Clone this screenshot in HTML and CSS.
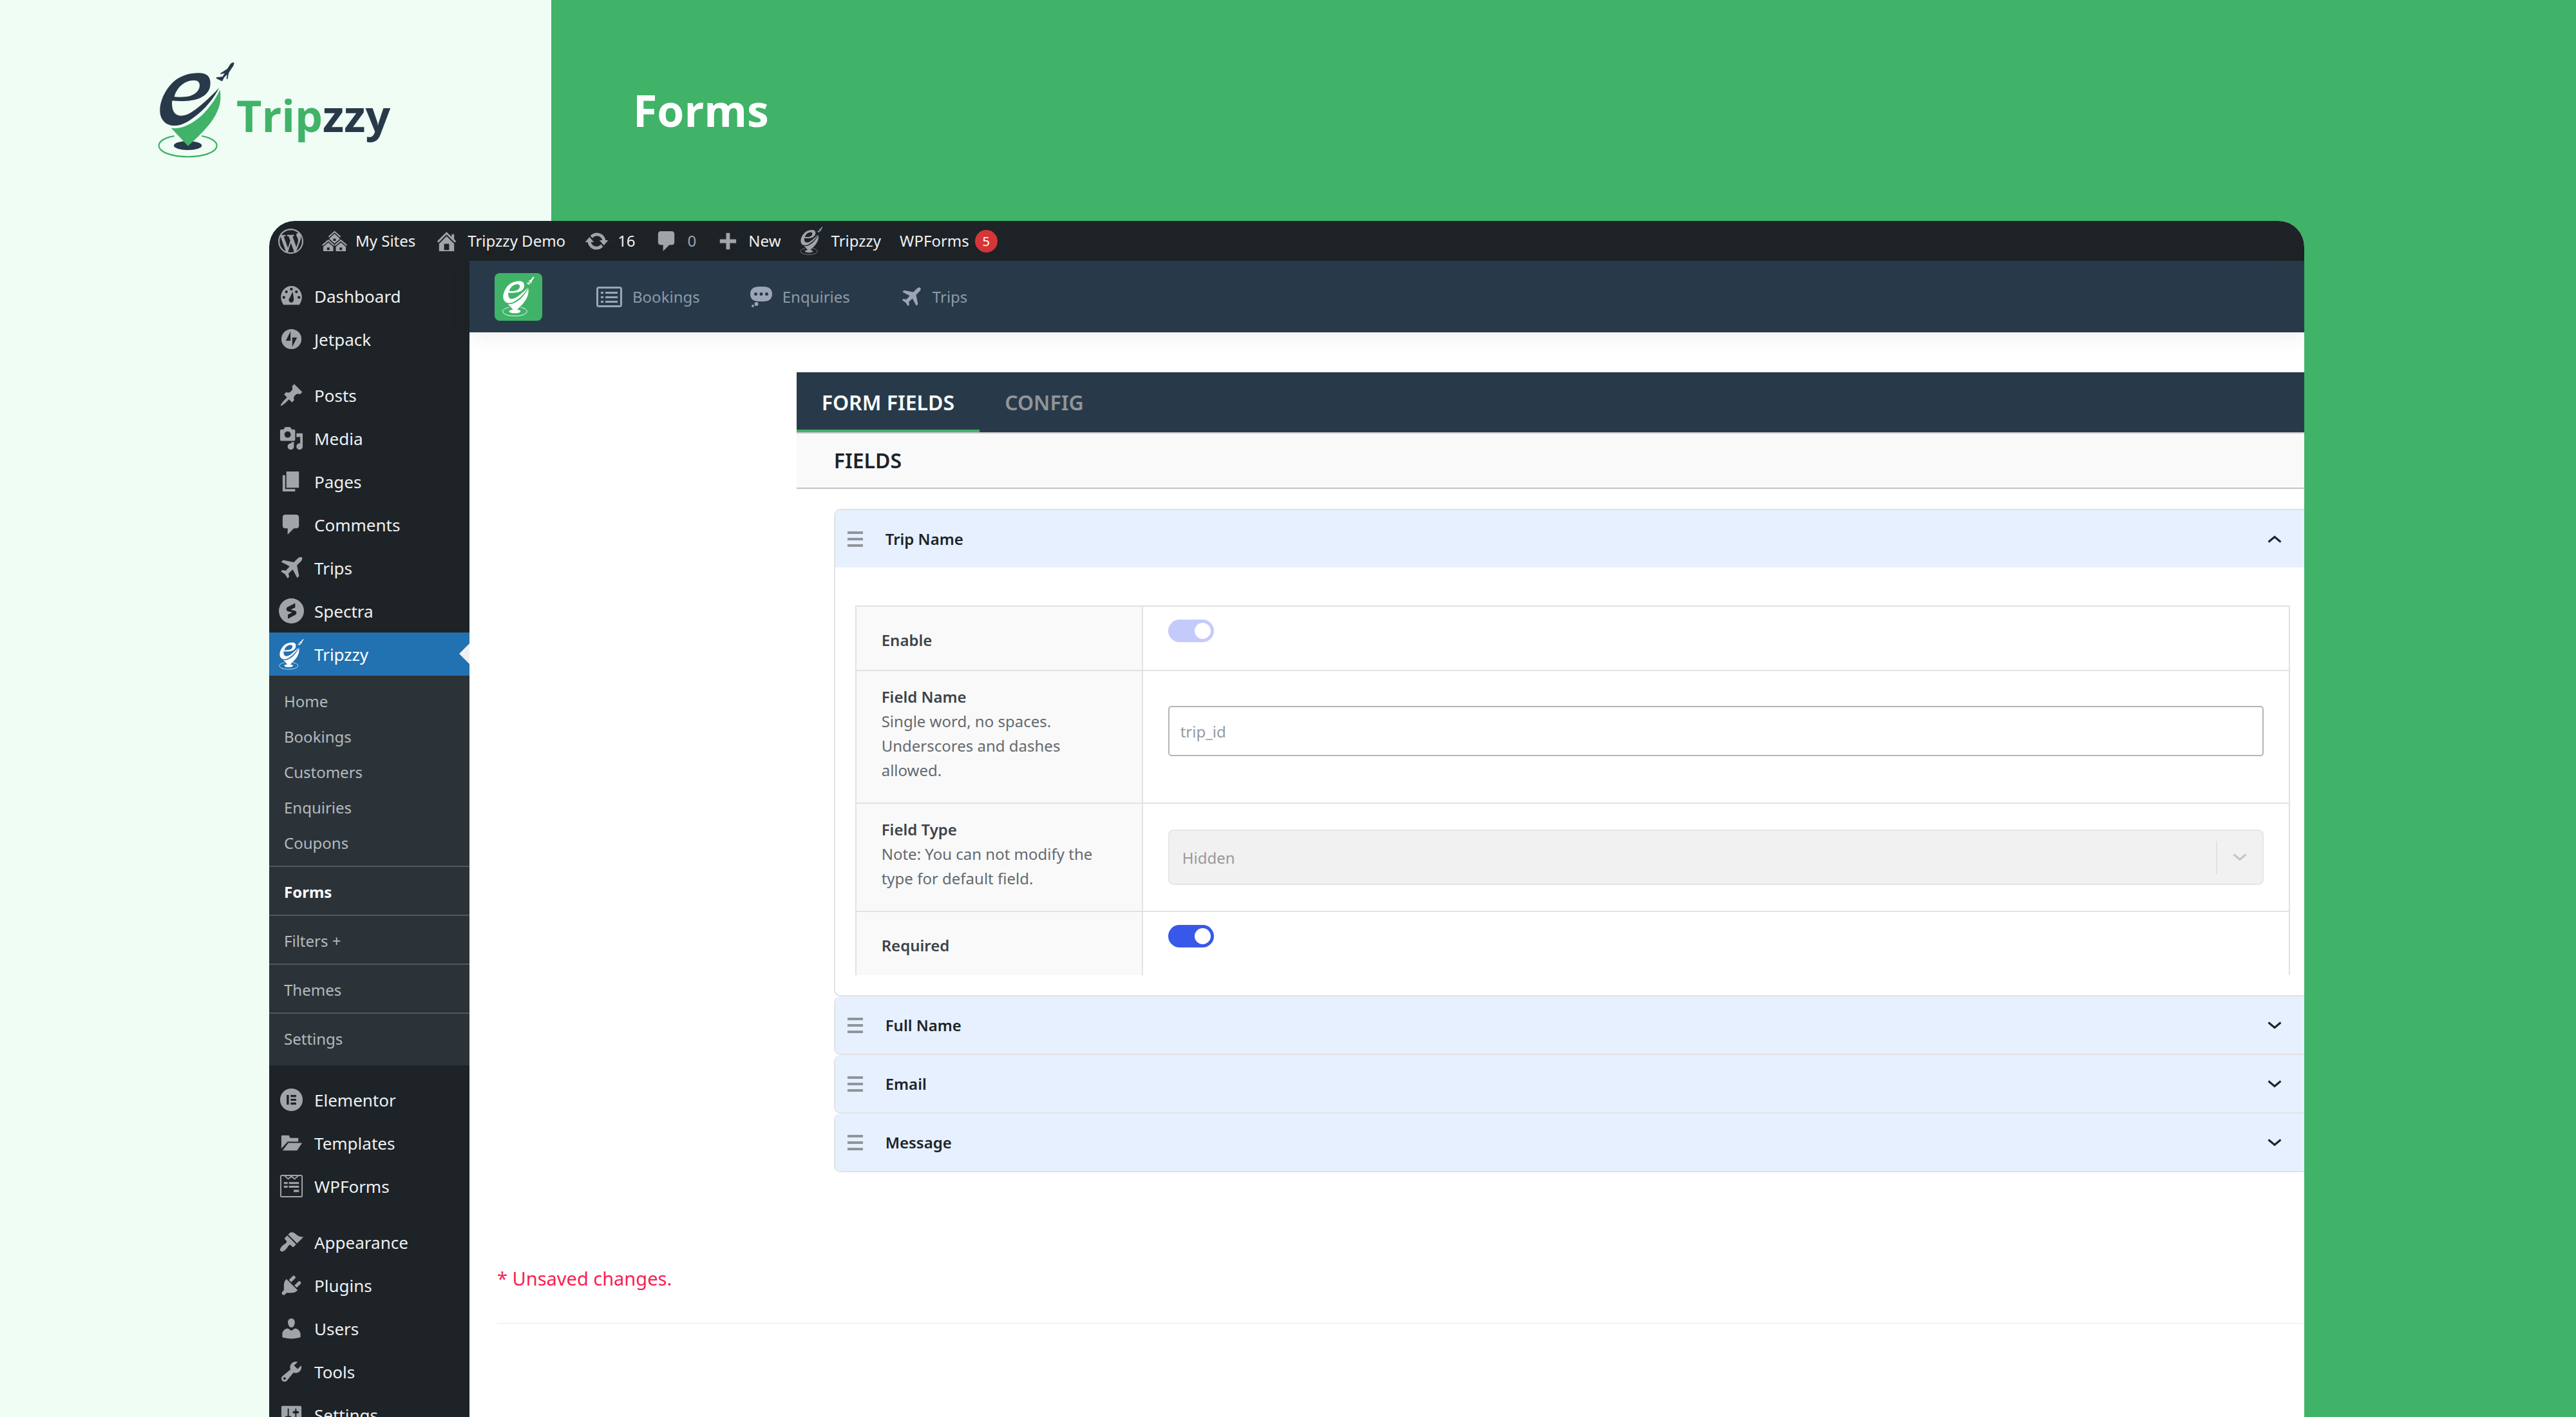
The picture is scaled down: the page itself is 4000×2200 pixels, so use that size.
FILE: index.html
```html
<!DOCTYPE html>
<html lang="en">
<head>
<meta charset="utf-8">
<title>Tripzzy – Forms</title>
<meta name="viewport" content="width=device-width, initial-scale=1">
<link rel="stylesheet" href="styles.css">
</head>
<body>
<svg class="sprite" aria-hidden="true">
  <symbol id="logo" viewBox="28 18 360 450">
    <g class="logo-dark">
      <ellipse cx="168" cy="408" rx="65" ry="21"/>
      <path fill-rule="evenodd" d="M314 138C290 188 248 238 202 272C172 295 140 315 108 315C66 315 38 290 38 244C38 200 62 148 100 112C136 80 180 70 218 70C256 70 273 86 273 118C273 150 256 172 226 186C194 201 140 204 95 199C91 240 104 269 136 269C166 269 196 247 226 222C258 195 290 166 314 138ZM105 181C114 142 150 104 196 104C216 104 223 114 223 127C223 150 206 168 180 176C160 182 130 183 105 181Z"/>
      <path d="M384 22Q376 18 367 27L352 50L320 71L320 76L340 71L329 87L302 90L300 95L328 109L338 90L351 77L348 98L353 98L359 68L381 35Z"/>
    </g>
    <path class="logo-green" d="M318 148C323 185 322 220 298 264C270 318 215 368 169 410L90 326C140 335 200 302 246 254C280 218 303 180 318 148Z"/>
    <path class="logo-ring" d="M102 364C60 372 33 388 33 408C33 438 92 460 168 460S303 438 303 408C303 388 276 372 236 364"/>
  </symbol>
  <symbol id="wordpress" viewBox="0 0 20 20"><path d="M20 10c0-5.51-4.49-10-10-10C4.48 0 0 4.49 0 10c0 5.52 4.48 10 10 10 5.51 0 10-4.48 10-10zM7.78 15.37L4.37 6.22c.55-.02 1.17-.08 1.17-.08.5-.06.44-1.13-.06-1.11 0 0-1.45.11-2.37.11-.18 0-.37 0-.58-.01C4.12 2.69 6.87 1.11 10 1.11c2.33 0 4.45.87 6.05 2.34-.68-.11-1.65.39-1.65 1.58 0 .74.45 1.36.9 2.1.35.61.55 1.36.55 2.46 0 1.49-1.4 5-1.4 5l-3.03-8.37c.54-.02.82-.17.82-.17.5-.05.44-1.25-.06-1.22 0 0-1.44.12-2.38.12-.87 0-2.33-.12-2.33-.12-.5-.03-.56 1.2-.06 1.22l.92.08 1.26 3.41zM17.41 10c.24-.64.74-1.87.43-4.25.7 1.29 1.05 2.71 1.05 4.25 0 3.29-1.73 6.24-4.4 7.78.97-2.59 1.94-5.2 2.92-7.78zM6.1 18.09C3.12 16.65 1.11 13.53 1.11 10c0-1.3.23-2.48.72-3.59C3.25 10.3 4.67 14.2 6.1 18.09zm4.03-6.63l2.58 6.98c-.86.29-1.76.45-2.71.45-.79 0-1.57-.11-2.29-.33.81-2.38 1.62-4.74 2.42-7.1z"/></symbol>
  <symbol id="sites" viewBox="0 0 20 20"><path d="M14.27 6.87L10 3.14 5.73 6.87 5 6.14l5-4.38 5 4.38zM14 8.42l-4.05 3.43L6 8.38v-.74l4-3.5 4 3.5v.78zM11 9.7V8H9v1.7h2zm-1.73 4.03L5 10 .73 13.73 0 13l5-4.38L10 13zm10 0L15 10l-4.27 3.73L10 13l5-4.38L20 13zM5 11l4 3.5V18H1v-3.5zm10 0l4 3.5V18h-8v-3.5zm-9 6v-2H4v2h2zm10 0v-2h-2v2h2z"/></symbol>
  <symbol id="home" viewBox="0 0 20 20"><path d="M16 8.5l1.53 1.53-1.06 1.06L10 4.6l-6.47 6.49-1.06-1.06L10 2.5l4 4v-2h2v4zm-6-2.46l6 5.99V18H4v-5.97zM12 17v-5H8v5h4z"/></symbol>
  <symbol id="update" viewBox="0 0 20 20"><path d="M10.2 3.28c3.53 0 6.43 2.61 6.92 6h2.08l-3.5 4-3.5-4h2.32c-.45-1.97-2.21-3.45-4.32-3.45-1.45 0-2.73.71-3.54 1.78L4.95 5.66C6.23 4.2 8.11 3.28 10.2 3.28zm-.4 13.44c-3.52 0-6.43-2.61-6.92-6H.8l3.5-4c1.17 1.33 2.33 2.67 3.5 4H5.48c.45 1.97 2.21 3.45 4.32 3.45 1.45 0 2.73-.71 3.54-1.78l1.71 1.95c-1.28 1.46-3.15 2.38-5.25 2.38z"/></symbol>
  <symbol id="comments" viewBox="0 0 20 20"><path d="M5 2h9c1.1 0 2 .9 2 2v7c0 1.1-.9 2-2 2h-2l-5 5v-5H5c-1.1 0-2-.9-2-2V4c0-1.1.9-2 2-2z"/></symbol>
  <symbol id="plus" viewBox="0 0 20 20"><path d="M17 8.500v3h-5v5H9v-5H4v-3h5v-5h3v5h5z"/></symbol>
  <symbol id="dashboard" viewBox="0 0 20 20"><path fill-rule="evenodd" d="M3.76 17h12.48c1.34-1.72 2.14-3.87 2.14-6.19C18.38 5.94 14.62 2 10 2S1.62 5.94 1.62 10.81c0 2.32.8 4.47 2.14 6.19zM10 3.500c.7 0 1.100.5 1.100 1.100s-.45 1.100-1.100 1.100-1.100-.45-1.100-1.100.45-1.100 1.100-1.100zM6 5.600c.65 0 1.100.45 1.100 1.100S6.650 7.800 6 7.800s-1.100-.45-1.100-1.100S5.350 5.600 6 5.600zm8 0c.65 0 1.100.45 1.100 1.100s-.45 1.100-1.100 1.100-1.100-.45-1.100-1.100.45-1.100 1.100-1.100zm-5.370 5.950L11 6.500l.9 5.500v1c0 1.100-.9 2.300-2 2.300s-2-1.200-2-2.300c0-.57.34-1.080.73-1.450zM4 10c.55 0 1.100.45 1.100 1.100S4.550 12.200 4 12.200s-1.100-.45-1.100-1.100S3.450 10 4 10zm12 0c.55 0 1.100.45 1.100 1.100s-.45 1.100-1.100 1.100-1.100-.45-1.100-1.100.45-1.100 1.100-1.100z"/></symbol>
  <symbol id="jetpack" viewBox="0 0 20 20"><path fill-rule="evenodd" d="M10 2a8 8 0 1 0 0 16a8 8 0 0 0 0-16zM9.300 3.800v7.500H5.600zM10.700 16.200V8.700h3.800z"/></symbol>
  <symbol id="pin" viewBox="0 0 20 20"><path d="M10.440 3.020l1.820-1.820 6.360 6.350-1.830 1.820c-1.050-.68-2.480-.57-3.410.36l-.75.75c-.92.93-1.040 2.350-.35 3.410l-1.830 1.820-2.410-2.410-2.800 2.790c-.42.42-3.380 2.710-3.800 2.290s1.860-3.390 2.280-3.810l2.790-2.790L4.100 9.360l1.830-1.820c1.050.69 2.480.57 3.400-.36l.75-.75c.93-.92 1.050-2.350.36-3.410z"/></symbol>
  <symbol id="media" viewBox="0 0 20 20"><path d="M13 11V4c0-.55-.45-1-1-1h-1.670L9 1H5L3.670 3H2c-.55 0-1 .45-1 1v7c0 .55.45 1 1 1h10c.55 0 1-.45 1-1zM7 4.500c1.380 0 2.500 1.120 2.500 2.500S8.380 9.500 7 9.500 4.500 8.380 4.500 7 5.620 4.500 7 4.500zM14 6h5v10.500c0 1.380-1.120 2.500-2.500 2.500S14 17.880 14 16.500s1.120-2.500 2.500-2.500c.17 0 .34.02.5.05V9h-3V6zm-4 8.050V13h2v3.500c0 1.380-1.120 2.500-2.500 2.500S7 17.880 7 16.500 8.120 14 9.500 14c.17 0 .34.02.5.05z"/></symbol>
  <symbol id="pages" viewBox="0 0 20 20"><path d="M6 15V2h10v13H6zm-1 1h8v2H3V5h2v11z"/></symbol>
  <symbol id="plane" viewBox="0 0 20 20"><path d="M18.300 1.700C17.500.9 15.900 1.600 15 2.500L11.900 5.600L3.400 3.900L1.900 5.400L8.600 8.900L5.500 12.300L2.800 11.800L1.600 13L4.900 15.100L7 18.400L8.200 17.200L7.700 14.500L11.100 11.400L14.600 18.100L16.100 16.600L14.400 8.100L17.500 5C18.400 4.100 19.100 2.500 18.300 1.700Z"/></symbol>
  <symbol id="spectra" viewBox="0 0 20 20"><path fill-rule="evenodd" d="M10 0a10 10 0 1 0 0 20a10 10 0 0 0 0-20zM13 3.800v3.500L9.400 9l3.800 1c1 .4 1.100 2 .2 2.900L7.200 16.300v-3.400l3.500-1.700-3.700-1c-1.200-.5-1.300-2.200-.3-3.100z"/></symbol>
  <symbol id="elementor" viewBox="0 0 20 20"><path fill-rule="evenodd" d="M10 1a9 9 0 1 0 0 18a9 9 0 0 0 0-18zM6.200 6.200h1.800v7.600H6.200zM9.400 6.200h4.400v1.600H9.400zM9.400 9.200h4.400v1.600H9.400zM9.400 12.200h4.400v1.600H9.400z"/></symbol>
  <symbol id="folder" viewBox="0 0 20 20"><path d="M2 4.500Q2 4 2.500 4H8L9 6h6.500v3H7L2 14.500zM7.500 10H18.500L14.500 16H3z"/></symbol>
  <symbol id="wpforms" viewBox="0 0 20 20"><path fill-rule="evenodd" d="M2.500 1h15Q19 1 19 2.500v15Q19 19 17.500 19h-15Q1 19 1 17.500v-15Q1 1 2.500 1zM2 2v16h16V2zM4 6.800h3v1.500H4zM8 6.800h8v1.500H8zM4 9.800h3v1.500H4zM8 9.800h8v1.500H8zM11.800 13h4.200v1.700h-4.200zM4.200 2L7.400 4.900 10 3 12.600 4.900 15.800 2H14.400L12.600 3.700 10.600 2H9.400L7.400 3.700 5.600 2z"/></symbol>
  <symbol id="brush" viewBox="0 0 20 20"><path d="M14.480 11.060L7.410 3.990l1.500-1.500c.5-.56 2.300-.47 3.510.32 1.210.8 1.430 1.280 2.910 2.100 1.180.64 2.450 1.260 4.450.85zm-.71.71L6.700 4.700 4.930 6.470c-.39.39-.39 1.020 0 1.410l1.060 1.060c.39.39.39 1.030 0 1.420-.6.6-1.430 1.110-2.210 1.690-.35.26-.7.53-1.010.84C1.430 14.230.4 16.080 1.400 17.070c.99 1 2.840-.03 4.180-1.360.31-.31.58-.66.85-1.020.57-.78 1.080-1.610 1.690-2.210.39-.39 1.020-.39 1.410 0l1.060 1.060c.39.39 1.020.39 1.410 0z"/></symbol>
  <symbol id="plug" viewBox="0 0 20 20"><path d="M13.110 4.360L9.870 7.600 8 5.730l3.240-3.240c.35-.34 1.050-.2 1.560.32.52.51.66 1.210.31 1.550zm-8 1.770l.91-1.120 9.010 9.010-1.190.84c-.71.71-2.630 1.160-3.820 1.160H6.140L4.900 17.260c-.59.59-1.540.59-2.120 0-.59-.58-.59-1.530 0-2.120l1.240-1.240v-3.880c0-1.130.4-3.190 1.090-3.890zm7.260 3.970l3.240-3.240c.34-.35 1.040-.21 1.550.31.52.51.66 1.210.31 1.550l-3.240 3.250z"/></symbol>
  <symbol id="users" viewBox="0 0 20 20"><path d="M10 9.250c-2.270 0-2.730-3.440-2.730-3.440C7 4.020 7.820 2 9.970 2c2.160 0 2.980 2.020 2.710 3.810 0 0-.41 3.440-2.680 3.440zm0 2.570L12.720 10c2.390 0 4.520 2.330 4.520 4.530v2.490s-3.650 1.130-7.240 1.130c-3.650 0-7.240-1.130-7.240-1.130v-2.490c0-2.250 1.940-4.480 4.470-4.480z"/></symbol>
  <symbol id="wrench" viewBox="0 0 20 20"><path d="M16.680 9.770c-1.340 1.340-3.300 1.670-4.950.99l-5.410 6.520c-.99.99-2.590.99-3.580 0s-.99-2.590 0-3.570l6.520-5.420c-.68-1.650-.35-3.610.99-4.950 1.280-1.280 3.120-1.620 4.720-1.060l-2.890 2.890 2.820 2.820 2.860-2.870c.53 1.580.18 3.390-1.080 4.650zM3.810 16.210c.4.39 1.040.39 1.430 0 .4-.4.4-1.040 0-1.430-.39-.4-1.030-.4-1.430 0-.39.39-.39 1.030 0 1.430z"/></symbol>
  <symbol id="settings" viewBox="0 0 20 20"><path d="M18 16V4c0-.55-.45-1-1-1H3c-.55 0-1 .45-1 1v12c0 .55.45 1 1 1h14c.55 0 1-.45 1-1zM8 11h1c.55 0 1 .45 1 1s-.45 1-1 1H8v1.500c0 .28-.22.5-.5.5s-.5-.22-.5-.5V13H6c-.55 0-1-.45-1-1s.45-1 1-1h1V5.500c0-.28.22-.5.5-.5s.5.22.5.5V11zm5-2h-1c-.55 0-1-.45-1-1s.45-1 1-1h1V5.500c0-.28.22-.5.5-.5s.5.22.5.5V7h1c.55 0 1 .45 1 1s-.45 1-1 1h-1v5.500c0 .28-.22.5-.5.5s-.5-.22-.5-.5V9z"/></symbol>
  <symbol id="list" viewBox="0 0 40 32"><path fill-rule="evenodd" d="M4 0h32q4 0 4 4v24q0 4-4 4H4q-4 0-4-4V4q0-4 4-4zM3 3v26h34V3zM7 8h4v3H7zM14 8h19v3H14zM7 15h4v3H7zM14 15h19v3H14zM7 22h4v3H7zM14 22h19v3H14z"/></symbol>
  <symbol id="chat" viewBox="0 0 34 32"><path fill-rule="evenodd" d="M12 0h10q12 1 12 11.500T22 23H12Q0 22 0 11.500T12 0zM6 11.500a2.500 2.500 0 1 0 5 0a2.500 2.500 0 1 0-5 0zM14.500 11.500a2.500 2.500 0 1 0 5 0a2.500 2.500 0 1 0-5 0zM23 11.500a2.500 2.500 0 1 0 5 0a2.500 2.500 0 1 0-5 0zM6.500 27a3 3 0 1 0 6 0a3 3 0 1 0-6 0zM2 30a2 2 0 1 0 4 0a2 2 0 1 0-4 0z"/></symbol>
  <symbol id="chevron" viewBox="0 0 22 14"><path class="chevron-line" d="M1.500 2.500L11 10.500L20.500 2.500"/></symbol>
  <symbol id="handle" viewBox="0 0 24 26"><path d="M0 1h24v4H0zM0 11h24v4H0zM0 21h24v4H0z"/></symbol>
</svg>

<div class="page">
  <header class="banner">
    <div class="brand">
      <svg class="brand-mark" aria-hidden="true"><use href="#logo"/></svg>
      <span class="brand-name">Trip<span class="brand-tail">zzy</span></span>
    </div>
    <h1 class="banner-title">Forms</h1>
  </header>

  <div class="window">
    <nav class="adminbar" aria-label="Toolbar">
      <a href="#" aria-label="WordPress"><svg class="icon"><use href="#wordpress"/></svg></a>
      <a href="#"><svg class="icon"><use href="#sites"/></svg>My Sites</a>
      <a href="#"><svg class="icon"><use href="#home"/></svg>Tripzzy Demo</a>
      <a href="#"><svg class="icon"><use href="#update"/></svg>16</a>
      <a href="#" class="muted"><svg class="icon"><use href="#comments"/></svg>0</a>
      <a href="#"><svg class="icon"><use href="#plus"/></svg>New</a>
      <a href="#"><svg class="icon-mark mono"><use href="#logo"/></svg>Tripzzy</a>
      <a href="#" class="with-badge">WPForms<span class="badge">5</span></a>
    </nav>

    <div class="workspace">
      <nav class="sidebar" aria-label="Main menu">
        <ul class="menu">
          <li><a href="#"><svg class="icon"><use href="#dashboard"/></svg>Dashboard</a></li>
          <li><a href="#"><svg class="icon"><use href="#jetpack"/></svg>Jetpack</a></li>
        </ul>
        <ul class="menu">
          <li><a href="#"><svg class="icon"><use href="#pin"/></svg>Posts</a></li>
          <li><a href="#"><svg class="icon"><use href="#media"/></svg>Media</a></li>
          <li><a href="#"><svg class="icon"><use href="#pages"/></svg>Pages</a></li>
          <li><a href="#"><svg class="icon"><use href="#comments"/></svg>Comments</a></li>
          <li><a href="#"><svg class="icon"><use href="#plane"/></svg>Trips</a></li>
          <li><a href="#"><svg class="icon"><use href="#spectra"/></svg>Spectra</a></li>
          <li>
            <a href="#" class="current"><svg class="icon-mark mono"><use href="#logo"/></svg>Tripzzy</a>
            <ul class="submenu">
              <li><a href="#">Home</a></li>
              <li><a href="#">Bookings</a></li>
              <li><a href="#">Customers</a></li>
              <li><a href="#">Enquiries</a></li>
              <li><a href="#">Coupons</a></li>
              <li class="ruled"><a href="#" class="active">Forms</a></li>
              <li class="ruled"><a href="#">Filters +</a></li>
              <li class="ruled"><a href="#">Themes</a></li>
              <li class="ruled"><a href="#">Settings</a></li>
            </ul>
          </li>
        </ul>
        <ul class="menu">
          <li><a href="#"><svg class="icon"><use href="#elementor"/></svg>Elementor</a></li>
          <li><a href="#"><svg class="icon"><use href="#folder"/></svg>Templates</a></li>
          <li><a href="#"><svg class="icon"><use href="#wpforms"/></svg>WPForms</a></li>
        </ul>
        <ul class="menu">
          <li><a href="#"><svg class="icon"><use href="#brush"/></svg>Appearance</a></li>
          <li><a href="#"><svg class="icon"><use href="#plug"/></svg>Plugins</a></li>
          <li><a href="#"><svg class="icon"><use href="#users"/></svg>Users</a></li>
          <li><a href="#"><svg class="icon"><use href="#wrench"/></svg>Tools</a></li>
          <li><a href="#"><svg class="icon"><use href="#settings"/></svg>Settings</a></li>
        </ul>
      </nav>

      <div class="content">
        <nav class="topnav" aria-label="Tripzzy">
          <a href="#" class="app-tile" aria-label="Tripzzy"><svg class="tile-mark mono"><use href="#logo"/></svg></a>
          <a href="#"><svg class="nav-list"><use href="#list"/></svg>Bookings</a>
          <a href="#"><svg class="nav-chat"><use href="#chat"/></svg>Enquiries</a>
          <a href="#"><svg class="nav-plane"><use href="#plane"/></svg>Trips</a>
        </nav>

        <main class="main">
          <section class="panel">
            <div class="tabs" role="tablist">
              <button type="button" role="tab" aria-selected="true" class="tab selected">FORM FIELDS</button>
              <button type="button" role="tab" aria-selected="false" class="tab">CONFIG</button>
            </div>
            <h2 class="panel-title">FIELDS</h2>

            <div class="fields">
              <div class="field">
                <button type="button" class="field-head" aria-expanded="true">
                  <svg class="handle"><use href="#handle"/></svg><span>Trip Name</span>
                  <svg class="chevron open"><use href="#chevron"/></svg>
                </button>
                <div class="field-body">
                  <table class="options">
                    <tr class="switch-row">
                      <th scope="row"><label for="enable">Enable</label></th>
                      <td><input type="checkbox" class="switch" id="enable" checked disabled></td>
                    </tr>
                    <tr class="name-row">
                      <th scope="row"><label for="name">Field Name</label><p>Single word, no spaces. Underscores and dashes allowed.</p></th>
                      <td><input type="text" class="textbox" id="name" placeholder="trip_id"></td>
                    </tr>
                    <tr>
                      <th scope="row"><label for="type">Field Type</label><p>Note: You can not modify the type for default field.</p></th>
                      <td>
                        <div class="select">
                          <select id="type" disabled><option>Hidden</option></select>
                          <span class="select-arrow"><svg class="chevron"><use href="#chevron"/></svg></span>
                        </div>
                      </td>
                    </tr>
                    <tr class="switch-row">
                      <th scope="row"><label for="required">Required</label></th>
                      <td><input type="checkbox" class="switch" id="required" checked></td>
                    </tr>
                  </table>
                </div>
              </div>
              <div class="field">
                <button type="button" class="field-head" aria-expanded="false">
                  <svg class="handle"><use href="#handle"/></svg><span>Full Name</span>
                  <svg class="chevron"><use href="#chevron"/></svg>
                </button>
              </div>
              <div class="field">
                <button type="button" class="field-head" aria-expanded="false">
                  <svg class="handle"><use href="#handle"/></svg><span>Email</span>
                  <svg class="chevron"><use href="#chevron"/></svg>
                </button>
              </div>
              <div class="field">
                <button type="button" class="field-head" aria-expanded="false">
                  <svg class="handle"><use href="#handle"/></svg><span>Message</span>
                  <svg class="chevron"><use href="#chevron"/></svg>
                </button>
              </div>
            </div>
          </section>
          <p class="notice">* Unsaved changes.</p>
        </main>
      </div>
    </div>
  </div>
</div>
</body>
</html>
```
FILE: styles.css
```css
:root {
  --green: #40b368;
  --navy: #283a49;
  --ink: #1d2327;
  --icon: #a0a5aa;
  --line: #e2e2e2;
}

* { box-sizing: border-box; }

body {
  margin: 0;
  font-family: "Noto Sans", "Open Sans", sans-serif;
  font-size: 24px;
  color: var(--ink);
}

a { color: inherit; text-decoration: none; }
ul { list-style: none; margin: 0; padding: 0; }
h1, h2, p { margin: 0; }
button, input, select { font: inherit; }
svg { flex: none; fill: currentColor; }

.sprite { display: none; }

/* Two-tone backdrop, the logo sits on the mint side */
.page {
  display: flex;
  flex-direction: column;
  height: 100vh;
  overflow: hidden;
  background: linear-gradient(to right, #effdf5 21.4%, var(--green) 21.4%);
}

.banner {
  display: grid;
  grid-template-columns: 21.4% 1fr;
  height: 343px;
  flex: none;
  font-family: "Open Sans", sans-serif;
  font-weight: 700;
  font-size: 68px;
  line-height: 88px;
}

.brand {
  display: flex;
  align-items: flex-start;
  gap: 2px;
  padding: 96px 0 0 245px;
  color: var(--green);
}
.brand-mark { width: 120px; height: 150px; }
.brand-name { padding-top: 39px; }
.brand-tail { color: var(--navy); }
.banner-title {
  padding: 127px 0 0 127px;
  font-size: 68px;
  font-weight: 700;
  color: #fff;
}

.logo-dark { fill: var(--mark, var(--navy)); }
.logo-green { fill: var(--mark, var(--green)); }
.logo-ring { fill: none; stroke: var(--mark, var(--green)); stroke-width: 7; stroke-linecap: round; }
.mono { --mark: currentColor; }

.window {
  flex: 1;
  display: flex;
  flex-direction: column;
  min-height: 0;
  margin: 0 10.55% 0 10.45%;
  border-radius: 40px 40px 0 0;
  overflow: hidden;
  background: #fff;
}

/* Toolbar */
.adminbar {
  display: flex;
  align-items: center;
  gap: 29px;
  flex: none;
  height: 62px;
  padding: 0 14px;
  background: var(--ink);
  color: #f0f0f1;
  line-height: 36px;
}
.adminbar a { display: flex; align-items: center; gap: 13px; }
.adminbar .muted { color: var(--icon); }
.adminbar .with-badge { gap: 9px; }
.icon { width: 39px; height: 39px; color: var(--icon); }
.icon-mark { width: 39px; height: 48px; }
.adminbar .icon-mark { width: 36px; height: 44px; color: var(--icon); }
.badge {
  width: 35px;
  height: 35px;
  border-radius: 50%;
  background: #d63638;
  color: #fff;
  font-size: 20px;
  line-height: 35px;
  text-align: center;
}

.workspace { flex: 1; display: grid; grid-template-columns: 311px 1fr; min-height: 0; }

/* Sidebar */
.sidebar {
  display: flex;
  flex-direction: column;
  gap: 20px;
  padding-top: 21px;
  background: var(--ink);
  color: #f0f0f1;
  font-size: 26px;
}
.menu > li > a {
  display: flex;
  align-items: center;
  gap: 16px;
  height: 67px;
  padding-left: 15px;
}
.menu > li > .current { position: relative; background: #2271b1; color: #fff; }
.current::after {
  content: "";
  position: absolute;
  right: 0;
  top: 17px;
  border: 16px solid transparent;
  border-left: 0;
  border-right-color: #f0f0f1;
}
.submenu {
  padding: 12px 0 14px;
  background: #2c3338;
  color: #b4b9be;
  font-size: 24px;
  line-height: 55px;
}
.submenu a { display: block; padding-left: 23px; }
.submenu .ruled { margin-top: 8px; padding-top: 11px; border-top: 2px solid #50575e; }
.submenu .active { color: #fff; font-weight: 700; }

/* Product navigation */
.content { display: flex; flex-direction: column; min-width: 0; }
.topnav {
  display: flex;
  align-items: center;
  gap: 78px;
  height: 111px;
  flex: none;
  padding-left: 39px;
  background: var(--navy);
  color: #8e99a8;
  box-shadow: 0 4px 32px rgba(0, 0, 0, 0.08);
}
.topnav a { display: flex; align-items: center; gap: 16px; }
.topnav svg { color: #9ba5b7; }
.topnav .app-tile {
  justify-content: center;
  width: 74px;
  height: 74px;
  margin-right: 6px;
  border-radius: 8px;
  background: var(--green);
}
.topnav .tile-mark { width: 50px; height: 63px; color: #fff; }
.nav-list { width: 40px; height: 32px; }
.nav-chat { width: 34px; height: 32px; }
.nav-plane { width: 34px; height: 34px; }

/* Form editor */
.main { padding-top: 62px; }
.panel { margin-left: 17.82%; }
.tabs { display: flex; height: 93px; background: var(--navy); }
.tab {
  padding: 4px 39px 0;
  border: 0;
  border-bottom: 4px solid transparent;
  background: none;
  color: #919599;
  font-size: 32px;
  font-weight: 600;
}
.tab.selected { border-bottom-color: var(--green); color: #fff; }
.panel-title {
  padding-left: 58px;
  border: solid #c3c4c7;
  border-width: 2px 0;
  background: #f9f9f9;
  font-size: 32px;
  font-weight: 600;
  line-height: 84px;
}

.fields { padding: 31px 0 0 58px; }
.field {
  border: 2px solid var(--line);
  border-right: 0;
  border-radius: 10px 0 0 10px;
  overflow: hidden;
}
.field + .field { border-top: 0; }
.field-head {
  display: flex;
  align-items: center;
  gap: 35px;
  width: 100%;
  height: 89px;
  padding: 0 35px 0 19px;
  border: 0;
  background: #e6f0ff;
  color: var(--ink);
  font-weight: 600;
  text-align: left;
}
.handle { width: 24px; height: 26px; color: #8f959b; }
.chevron { width: 22px; height: 14px; margin-left: auto; }
.chevron-line { fill: none; stroke: currentColor; stroke-width: 3; }
.open { transform: rotate(180deg); }

.field-body { padding: 59px 22px 31px 31px; }
.options {
  width: 100%;
  border: 2px solid var(--line);
  border-bottom: 0;
  border-collapse: collapse;
}
.options th, .options td { padding: 0 39px; border-bottom: 2px solid var(--line); }
.options tr:last-child > * { border-bottom: 0; }
.options th {
  width: 445px;
  padding-top: 21px;
  padding-bottom: 31px;
  border-right: 2px solid var(--line);
  background: #f9f9f9;
  color: #3c434a;
  font-weight: 600;
  line-height: 38px;
  text-align: left;
  vertical-align: top;
}
.options th p { color: #646970; font-weight: 400; }
.options label { display: block; }
.options .switch-row th { padding-top: 33px; padding-bottom: 27px; }
.options .switch-row td { padding-top: 20px; vertical-align: top; }
.options .name-row td { padding-bottom: 18px; }

.switch {
  appearance: none;
  display: flex;
  align-items: center;
  justify-content: flex-end;
  width: 71px;
  height: 35px;
  margin: 0;
  padding-right: 5px;
  border-radius: 18px;
  background: #3858e9;
}
.switch::before { content: ""; width: 25px; height: 25px; border-radius: 50%; background: #fff; }
.switch:disabled { background: #c4cbfa; }

.textbox {
  display: block;
  width: 100%;
  height: 78px;
  padding: 0 17px;
  border: 2px solid #b5b5b5;
  border-radius: 5px;
  background: #fff;
}
.textbox::placeholder { color: #969ba0; opacity: 1; }

.select {
  display: flex;
  align-items: center;
  height: 86px;
  border: 2px solid #e6e6e6;
  border-radius: 8px;
  background: #f1f1f1;
}
.select select {
  flex: 1;
  height: 82px;
  padding: 0 20px;
  border: 0;
  appearance: none;
  background: none;
  color: #999;
  opacity: 1;
}
.select-arrow {
  display: flex;
  align-items: center;
  justify-content: center;
  width: 72px;
  height: 51px;
  border-left: 2px solid #e2e2e2;
  color: #c4c4c4;
}
.select-arrow .chevron { margin: 0; }
.select-arrow .chevron-line { stroke-width: 4; }

.notice {
  margin: 145px 0 0 43px;
  padding-bottom: 48px;
  border-bottom: 3px solid #f7f7f7;
  color: #f91d52;
  font-size: 29px;
  line-height: 40px;
}
```
